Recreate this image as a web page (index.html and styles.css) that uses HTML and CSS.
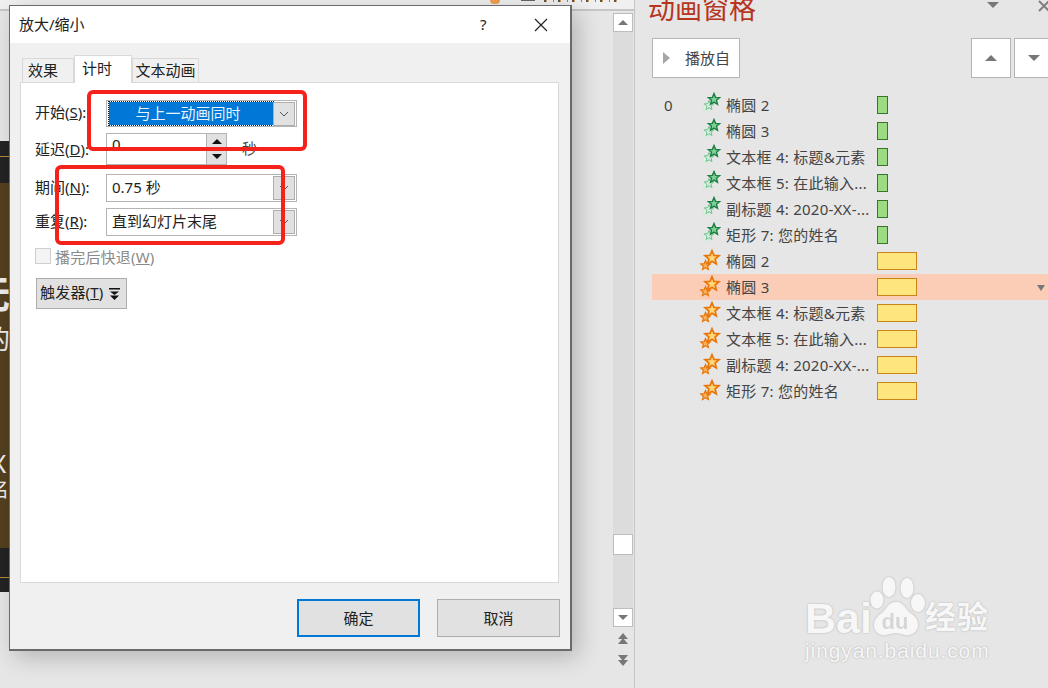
FILE: index.html
```html
<!DOCTYPE html>
<html lang="zh-CN">
<head>
<meta charset="utf-8">
<title>放大/缩小</title>
<link rel="stylesheet" href="styles.css">
</head>
<body>
<svg class="defs" width="0" height="0" aria-hidden="true">
  <symbol id="star" viewBox="-11 -11 22 22" overflow="visible"><polygon points="0,-10 2.65,-3.64 9.51,-3.09 4.29,1.39 5.88,8.09 0,4.5 -5.88,8.09 -4.29,1.39 -9.51,-3.09 -2.65,-3.64"/></symbol>
  <symbol id="ico-green" viewBox="0 0 24 26">
    <use href="#star" class="st-g3" x="3" y="10" width="11" height="11"/>
    <use href="#star" class="st-g2" x="5.5" y="8" width="11" height="11"/>
    <use href="#star" class="st-g1" x="9.5" y="1" width="13" height="13"/>
  </symbol>
  <symbol id="ico-orange" viewBox="0 0 24 26">
    <use href="#star" class="st-o2" x="2" y="12" width="11" height="11"/>
    <use href="#star" class="st-o1" x="6" y="2" width="16" height="16"/>
  </symbol>
</svg>

<div class="app">
  <div class="stage">
    <div class="ribbon">
      <span class="rb-icon"></span>
      <span class="rb-gray"></span>
      <span class="rb-glyphs"></span>
    </div>
    <div class="workspace">
      <div class="slide">
        <div class="slide-top"></div>
        <div class="slide-mid">
          <span class="sl sl-1">无</span>
          <span class="sl sl-2">的</span>
          <span class="sl sl-3">X</span>
          <span class="sl sl-4">名</span>
        </div>
        <div class="slide-bot"></div>
      </div>
      <div class="scrollbar">
        <div class="sb-btn"><i class="tri up"></i></div>
        <div class="sb-track"><div class="sb-thumb"></div></div>
        <div class="sb-btn"><i class="tri down"></i></div>
        <div class="sb-page"><i class="tri up s"></i><i class="tri up s"></i></div>
        <div class="sb-page"><i class="tri down s"></i><i class="tri down s"></i></div>
      </div>
    </div>
  </div>

  <aside class="pane">
    <header class="pane-head">
      <h1 class="pane-title">动画窗格</h1>
      <i class="tri down pane-menu"></i>
      <svg class="pane-close" width="12" height="12" viewBox="0 0 12 12"><path d="M1 1l10 10M11 1L1 11"/></svg>
    </header>
    <div class="pane-tools">
      <button class="play"><i class="play-ico"></i><span class="play-txt">播放自</span></button>
      <div class="order">
        <button class="order-btn"><i class="tri up"></i></button>
        <button class="order-btn"><i class="tri down"></i></button>
      </div>
    </div>
    <ul class="anim-list">
      <li class="anim"><span class="num">0</span><svg class="ico"><use href="#ico-green"/></svg><span class="name">椭圆 2</span><b class="bar green"></b></li>
      <li class="anim"><span class="num"></span><svg class="ico"><use href="#ico-green"/></svg><span class="name">椭圆 3</span><b class="bar green"></b></li>
      <li class="anim"><span class="num"></span><svg class="ico"><use href="#ico-green"/></svg><span class="name">文本框 4: 标题&amp;元素</span><b class="bar green"></b></li>
      <li class="anim"><span class="num"></span><svg class="ico"><use href="#ico-green"/></svg><span class="name">文本框 5: 在此输入...</span><b class="bar green"></b></li>
      <li class="anim"><span class="num"></span><svg class="ico"><use href="#ico-green"/></svg><span class="name">副标题 4: 2020-XX-...</span><b class="bar green"></b></li>
      <li class="anim"><span class="num"></span><svg class="ico"><use href="#ico-green"/></svg><span class="name">矩形 7: 您的姓名</span><b class="bar green"></b></li>
      <li class="anim"><span class="num"></span><svg class="ico"><use href="#ico-orange"/></svg><span class="name">椭圆 2</span><b class="bar yellow"></b></li>
      <li class="anim active"><span class="num"></span><svg class="ico"><use href="#ico-orange"/></svg><span class="name">椭圆 3</span><b class="bar yellow"></b><i class="tri down row-menu"></i></li>
      <li class="anim"><span class="num"></span><svg class="ico"><use href="#ico-orange"/></svg><span class="name">文本框 4: 标题&amp;元素</span><b class="bar yellow"></b></li>
      <li class="anim"><span class="num"></span><svg class="ico"><use href="#ico-orange"/></svg><span class="name">文本框 5: 在此输入...</span><b class="bar yellow"></b></li>
      <li class="anim"><span class="num"></span><svg class="ico"><use href="#ico-orange"/></svg><span class="name">副标题 4: 2020-XX-...</span><b class="bar yellow"></b></li>
      <li class="anim"><span class="num"></span><svg class="ico"><use href="#ico-orange"/></svg><span class="name">矩形 7: 您的姓名</span><b class="bar yellow"></b></li>
    </ul>
  </aside>
</div>

<section class="dialog">
  <div class="titlebar">
    <span class="dlg-title">放大/缩小</span>
    <span class="dlg-help">?</span>
    <svg class="dlg-close" width="14" height="14" viewBox="0 0 14 14"><path d="M1 1l12 12M13 1L1 13"/></svg>
  </div>
  <div class="dlg-body">
    <div class="tabs">
      <span class="tab tab-a">效果</span>
      <span class="tab tab-b on">计时</span>
      <span class="tab tab-c">文本动画</span>
    </div>
    <div class="panel">
      <div class="row r-start">
        <label class="lbl">开始(<u>S</u>):</label>
        <div class="combo">
          <span class="combo-sel">与上一动画同时</span>
          <span class="combo-btn"><svg class="chev" viewBox="0 0 10 6"><path d="M1 1l4 4 4-4"/></svg></span>
        </div>
      </div>
      <div class="row r-delay">
        <label class="lbl">延迟(<u>D</u>):</label>
        <div class="spin">
          <span class="spin-val">0</span>
          <span class="spin-btns"><span class="spin-b"><i class="tri up s"></i></span><span class="spin-b"><i class="tri down s"></i></span></span>
        </div>
        <span class="unit">秒</span>
      </div>
      <div class="row r-period">
        <label class="lbl">期间(<u>N</u>):</label>
        <div class="combo">
          <span class="combo-val">0.75 秒</span>
          <span class="combo-btn"><svg class="chev" viewBox="0 0 10 6"><path d="M1 1l4 4 4-4"/></svg></span>
        </div>
      </div>
      <div class="row r-repeat">
        <label class="lbl">重复(<u>R</u>):</label>
        <div class="combo">
          <span class="combo-val">直到幻灯片末尾</span>
          <span class="combo-btn"><svg class="chev" viewBox="0 0 10 6"><path d="M1 1l4 4 4-4"/></svg></span>
        </div>
      </div>
      <div class="row r-check">
        <span class="check"></span>
        <span class="check-lbl">播完后快退(<u>W</u>)</span>
      </div>
      <button class="trigger"><span class="trig-txt">触发器(<u>T</u>)</span><svg class="trig-ico" width="11" height="14" viewBox="0 0 11 14"><path d="M0 1h11v1.5H0zM1 4.5h9L5.5 8zM1 8.5h9L5.5 13z"/></svg></button>
    </div>
    <div class="dlg-foot">
      <button class="dbtn primary">确定</button>
      <button class="dbtn">取消</button>
    </div>
  </div>
</section>

<div class="mark mark-1"></div>
<div class="mark mark-2"></div>

<div class="wm">
  <svg class="wm-paw" width="60" height="66" viewBox="0 0 60 66">
    <ellipse cx="21" cy="12" rx="6.5" ry="10"/>
    <ellipse cx="39" cy="13" rx="6.5" ry="10"/>
    <ellipse cx="9" cy="25" rx="6.5" ry="8.5"/>
    <ellipse cx="50" cy="28" rx="7" ry="9"/>
    <path d="M28 27c7 0 9 6 13 10 4 3 9 6 9 13 0 8-8 11-13 10-4-1-6-2-9-2s-6 1-10 2c-6 1-12-3-12-10 0-6 5-10 9-13 4-4 6-10 13-10z"/>
    <text class="wm-du" x="27" y="54">du</text>
  </svg>
  <div class="wm-top"><span class="wm-bai">Bai</span><span class="wm-cn">经验</span></div>
  <div class="wm-url">jingyan.baidu.com</div>
</div>
</body>
</html>
```
FILE: styles.css
```css
* { box-sizing: border-box; }
html, body { margin: 0; padding: 0; height: 100%; overflow: hidden; }
body {
  width: 1048px; height: 688px; position: relative; background: #e6e6e6;
  font-family: "Noto Sans", "Noto Sans CJK SC", sans-serif; font-size: 15px; color: #222;
}
.defs { position: absolute; }
button { font: inherit; color: inherit; padding: 0; margin: 0; }
i { display: block; }

.tri { width: 0; height: 0; border-left: 6px solid transparent; border-right: 6px solid transparent; }
.tri.up { border-bottom: 6px solid #777; }
.tri.down { border-top: 6px solid #777; }
.tri.s { border-left-width: 5px; border-right-width: 5px; }
.tri.up.s { border-bottom-width: 5px; }
.tri.down.s { border-top-width: 5px; }

.app { display: flex; width: 1048px; height: 688px; }
.stage { width: 635px; flex: none; display: flex; flex-direction: column; border-right: 1px solid #c6c6c6; }
.ribbon { height: 11px; background: #f0f0f0; border-bottom: 2px solid #c6c6c6; flex: none; display: flex; align-items: flex-start; padding-left: 490px; }
.rb-icon { width: 10px; height: 4px; background: #f0a050; border-radius: 0 0 4px 4px; flex: none; }
.rb-gray { width: 14px; height: 1px; background: #666; margin-left: 21px; flex: none; }
.rb-glyphs { width: 76px; height: 2px; margin-left: 9px; flex: none; background: repeating-linear-gradient(90deg, #555 0 2px, #d99a55 2px 3px, transparent 3px 9px, #5b8fc4 9px 10px, transparent 10px 14px); }
.workspace { flex: 1; display: flex; justify-content: space-between; min-height: 0; }
.slide { width: 10px; margin-top: 130px; height: 451px; display: flex; flex-direction: column; overflow: hidden; }
.slide-top { height: 42px; background: #232323; flex: none; position: relative; }
.slide-top::after { content: ""; position: absolute; left: 0; right: 0; top: 15px; height: 1px; background: #b98b35; }
.slide-mid { flex: 1; background: #54401f; position: relative; overflow: hidden; }
.slide-bot { height: 44px; background: #232323; flex: none; position: relative; }
.slide-bot::after { content: ""; position: absolute; left: 0; right: 0; top: 29px; height: 1px; background: #b98b35; }
.sl { position: absolute; color: #eee; line-height: 1; left: -14px; }
.sl-1 { top: 91px; font-size: 38px; font-weight: 700; left: -28px; }
.sl-2 { top: 143px; font-size: 26px; left: -16px; }
.sl-3 { top: 267px; font-size: 26px; left: -9px; }
.sl-4 { top: 297px; font-size: 20px; left: -11px; }

.scrollbar { width: 20px; margin: 2px 1px 0 0; display: flex; flex-direction: column; background: transparent; }
.sb-btn { height: 19px; background: #fff; border: 1px solid #bdbdbd; display: flex; align-items: center; justify-content: center; flex: none; }
.sb-btn .tri { border-left-width: 5px; border-right-width: 5px; }
.sb-btn .tri.up { border-bottom-width: 5px; }
.sb-btn .tri.down { border-top-width: 5px; }
.sb-track { flex: none; height: 576px; background: #dcdcdc; padding-top: 502px; }
.sb-thumb { height: 21px; background: #fff; border: 1px solid #bdbdbd; }
.sb-page { height: 22px; display: flex; flex-direction: column; align-items: center; justify-content: center; flex: none; }
.sb-page .tri { border-left-width: 5px; border-right-width: 5px; }
.sb-page .tri.up { border-bottom-width: 6px; }
.sb-page .tri.down { border-top-width: 6px; }
.sb-page .tri + .tri { margin-top: -1px; }

.pane { flex: 1; min-width: 0; background: #e6e6e6; position: relative; overflow: hidden; }
.pane-head { height: 38px; position: relative; }
.pane-title { margin: 0; position: absolute; left: 13px; top: -8px; font-size: 27px; line-height: 34px; font-weight: 400; color: #b5351f; }
.pane-menu { position: absolute; left: 352px; top: 2px; }
.pane-close { position: absolute; left: 403px; top: 0; }
.pane-close path { stroke: #808080; stroke-width: 2; fill: none; }
.pane-tools { display: flex; justify-content: space-between; padding-left: 17px; margin-right: -6px; }
.play { width: 88px; height: 40px; background: #fff; border: 1px solid #b4b4b4; display: flex; align-items: center; color: #444; }
.play-ico { width: 0; height: 0; margin: 0 15px 0 10px; border-left: 7px solid #a6a6a6; border-top: 6px solid transparent; border-bottom: 6px solid transparent; }
.play-txt { margin-top: -2px; white-space: nowrap; }
.order { display: flex; gap: 3px; }
.order-btn { width: 40px; height: 40px; background: #fff; border: 1px solid #b4b4b4; display: flex; align-items: center; justify-content: center; }

.anim-list { list-style: none; margin: 14px 0 0; padding: 0 0 0 17px; }
.anim { height: 26px; display: flex; align-items: center; position: relative; color: #444; }
.anim.active { background: #fccdb6; }
.num { width: 46px; padding-left: 12px; flex: none; }
.ico { width: 24px; height: 26px; flex: none; margin-right: 4px; overflow: visible; }
.name { width: 151px; flex: none; white-space: nowrap; line-height: 20px; letter-spacing: .25px; }
.bar { display: block; height: 18px; flex: none; margin-top: -1px; }
.bar.green { width: 11px; background: #9bdb82; border: 1px solid #38752b; }
.bar.yellow { width: 40px; background: #ffe57e; border: 1px solid #cc8415; }
.row-menu { position: absolute; right: 3px; top: 11px; border-left-width: 4px; border-right-width: 4px; border-top: 4px solid #444; }
.st-g1 { fill: #7fd09a; stroke: #1c8040; stroke-width: 2.4; }
.st-g2 { fill: #d5efdc; stroke: #6fbf8e; stroke-width: 2; }
.st-g3 { fill: #e4f3e8; stroke: #d2ebd9; stroke-width: 2; }
.st-o1 { fill: #ffd877; stroke: #e8760c; stroke-width: 2.4; }
.st-o2 { fill: #f9b25a; stroke: #e8760c; stroke-width: 2.4; }

.dialog {
  position: absolute; left: 9px; top: 5px; width: 563px; height: 646px;
  background: #f0f0f0; border: 1px solid #6a6a6a; border-width: 1px 2px 2px 1px;
  box-shadow: 6px 6px 22px rgba(0,0,0,.22); display: flex; flex-direction: column;
}
.titlebar { height: 37px; background: #fff; position: relative; flex: none; display: flex; align-items: center; padding-left: 9px; }
.dlg-title { line-height: 20px; margin-top: -2px; }
.dlg-help { position: absolute; left: 470px; top: 8px; line-height: 20px; }
.dlg-close { position: absolute; left: 524px; top: 12px; }
.dlg-close path { stroke: #222; stroke-width: 1.2; fill: none; }
.dlg-body { flex: 1; padding: 12px 0 0 10px; display: flex; flex-direction: column; min-height: 0; }
.tabs { height: 27px; display: flex; align-items: flex-end; margin-left: 2px; position: relative; z-index: 1; flex: none; }
.tab { height: 24px; background: #f0f0f0; border: 1px solid #d9d9d9; border-bottom: 0; display: flex; align-items: center; justify-content: center; line-height: 20px; white-space: nowrap; padding-bottom: 2px; }
.tab-a { width: 52px; padding-right: 10px; }
.tab-b { width: 58px; height: 28px; background: #fff; margin-bottom: -1px; padding-bottom: 3px; padding-right: 12px; }
.tab-c { width: 67px; }
.panel { width: 539px; height: 501px; background: #fff; border: 1px solid #d9d9d9; padding: 17px 0 0 14px; flex: none; }
.row { display: flex; align-items: center; }
.lbl { width: 71px; flex: none; line-height: 20px; color: #222; white-space: nowrap; margin-top: -3px; }
.r-start { height: 27px; }
.r-delay { height: 32px; margin-top: 6px; align-items: flex-start; }
.r-delay .lbl { margin-top: 6px; }
.r-period { height: 28px; margin-top: 9px; }
.r-repeat { height: 28px; margin-top: 6px; }
.r-check { height: 16px; margin-top: 12px; }
.combo { width: 191px; height: 100%; border: 1px solid #b4b4b4; background: #fff; display: flex; align-items: center; justify-content: space-between; padding: 1px; }
.combo-sel { width: 165px; height: 23px; margin-left: 1px; padding-right: 6px; background: #0078d7; color: #e8f2fb; outline: 1px dotted #222; text-align: center; line-height: 23px; white-space: nowrap; }
.combo-val { padding-left: 4px; line-height: 20px; margin-top: -2px; white-space: nowrap; }
.combo-btn { width: 22px; height: 24px; background: #e1e1e1; border: 1px solid #adadad; display: flex; align-items: center; justify-content: center; flex: none; }
.chev { width: 10px; height: 6px; }
.chev path { stroke: #555; stroke-width: 1; fill: none; }
.spin { width: 121px; height: 32px; border: 1px solid #b4b4b4; background: #fff; position: relative; display: flex; justify-content: space-between; }
.spin-val { padding: 0 0 0 5px; line-height: 20px; }
.spin-btns { width: 20px; display: flex; flex-direction: column; background: #e1e1e1; border-left: 1px solid #b4b4b4; }
.spin-b { flex: 1; display: flex; align-items: center; justify-content: center; }
.spin-b + .spin-b { border-top: 1px solid #f0f0f0; }
.spin-b .tri.up { border-bottom-color: #111; }
.spin-b .tri.down { border-top-color: #111; }
.unit { margin: 5px 0 0 15px; line-height: 20px; color: #444; }
.check { width: 16px; height: 16px; background: #f4f4f4; border: 1px solid #cfcfcf; flex: none; }
.check-lbl { margin-left: 4px; color: #8a8a8a; line-height: 20px; margin-top: 2px; white-space: nowrap; letter-spacing: .2px; }
.trigger { margin: 14px 0 0 1px; width: 91px; height: 31px; background: #e1e1e1; border: 1px solid #adadad; display: flex; align-items: center; padding-left: 3px; gap: 5px; white-space: nowrap; }
.trig-txt { margin-top: -3px; line-height: 20px; letter-spacing: .2px; }
.trig-ico { fill: #111; flex: none; }
.dlg-foot { display: flex; gap: 17px; padding: 16px 0 0 277px; }
.dbtn { width: 123px; height: 38px; background: #e1e1e1; border: 1px solid #adadad; padding-bottom: 1px; }
.dbtn.primary { border: 2px solid #0078d7; }

.mark { position: absolute; border: 4px solid #f5211b; border-radius: 6px; pointer-events: none; }
.mark-1 { left: 87px; top: 90px; width: 220px; height: 61px; }
.mark-2 { left: 55px; top: 165px; width: 230px; height: 80px; }

.wm { position: absolute; left: 805px; top: 575px; width: 200px; height: 95px; color: #f7f7f7; pointer-events: none; font-family: "Liberation Sans", "Noto Sans CJK SC", sans-serif; }
.wm-paw { position: absolute; left: 63px; top: 0; fill: #f7f7f7; filter: drop-shadow(0 0 1px #b5b5b5); }
.wm-du { fill: #d6d6d6; font-size: 22px; font-weight: 700; font-family: "Liberation Sans", sans-serif; text-anchor: middle; }
.wm-top { display: flex; position: absolute; left: 0; top: 24px; line-height: 38px; text-shadow: 0 0 2px #a9a9a9; }
.wm-bai { font-size: 43px; font-weight: 700; width: 120px; }
.wm-cn { font-size: 31px; font-weight: 700; letter-spacing: 1px; }
.wm-url { position: absolute; left: 0; top: 63px; font-size: 21px; line-height: 26px; letter-spacing: .9px; text-shadow: 0 0 2px #a9a9a9; white-space: nowrap; }
```
